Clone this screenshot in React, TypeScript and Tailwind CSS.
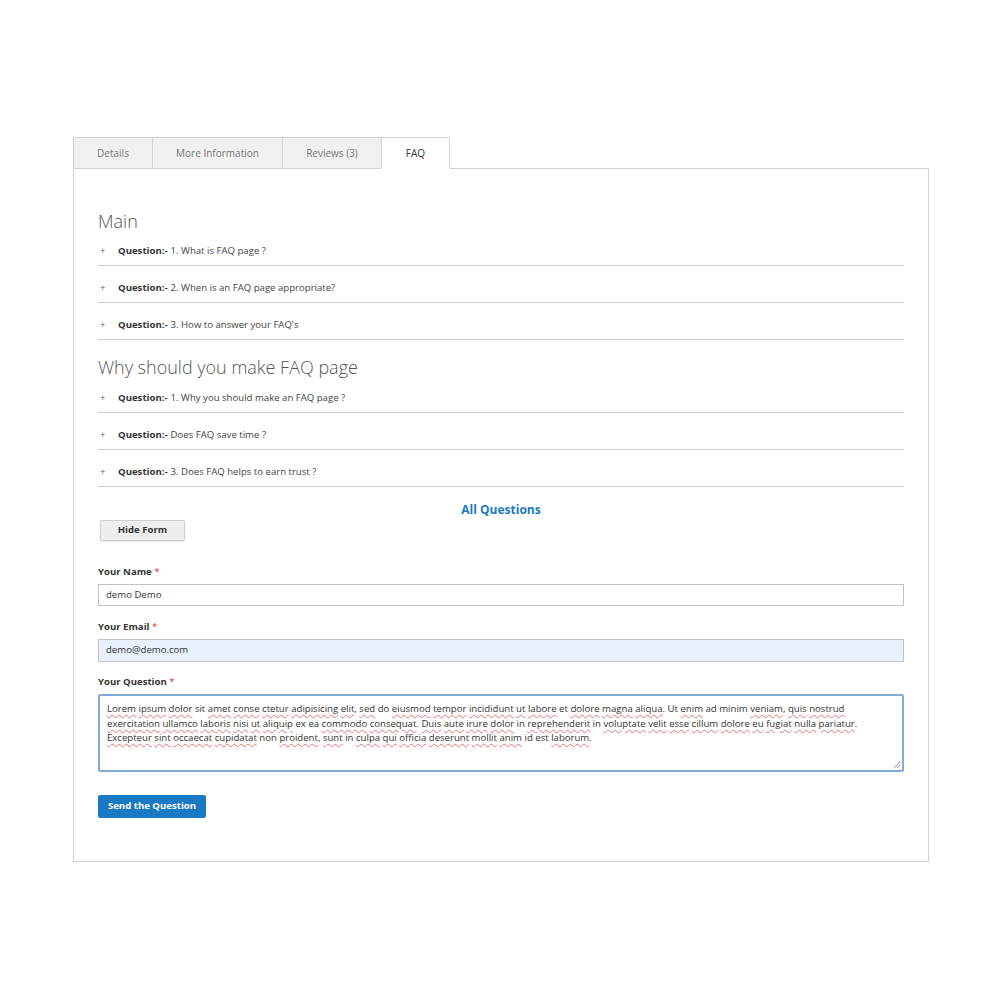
const tabs = ["Details", "More Information", "Reviews (3)", "FAQ"];

const groups = [
  {
    title: "Main",
    items: ["1. What is FAQ page ?", "2. When is an FAQ page appropriate?", "3. How to answer your FAQ's"],
  },
  {
    title: "Why should you make FAQ page",
    items: ["1. Why you should make an FAQ page ?", "Does FAQ save time ?", "3. Does FAQ helps to earn trust ?"],
  },
];

const lorem =
  "Lorem ipsum dolor sit amet conse ctetur adipisicing elit, sed do eiusmod tempor incididunt ut labore et dolore magna aliqua. Ut enim ad minim veniam, quis nostrud exercitation ullamco laboris nisi ut aliquip ex ea commodo consequat. Duis aute irure dolor in reprehenderit in voluptate velit esse cillum dolore eu fugiat nulla pariatur. Excepteur sint occaecat cupidatat non proident, sunt in culpa qui officia deserunt mollit anim id est laborum.";

const plain = ["sit", "do", "et", "Ut", "ad", "minim", "ex", "ea", "in", "non", "id", "est"];

function Label({ text }: { text: string }) {
  return (
    <div className="text-[9.6px] leading-[15px] font-bold text-[#333] mb-[5px]">
      {text} <span className="text-[#e02b27] font-normal">*</span>
    </div>
  );
}

export default function App() {
  return (
    <div className="w-[1000px] h-[1000px] bg-white pt-[137px] pl-[73px] font-['Open_Sans',sans-serif] text-[#333]">
      <div className="w-[856px]">
        <div className="flex h-[32px] relative z-10">
          {tabs.map((t, i) => {
            const active = i === 3;
            return (
              <div
                key={t}
                className={
                  active
                    ? "w-[69px] bg-white border border-[#d1d1d1] border-b-white flex items-center justify-center text-[10px] text-[#333] -ml-px"
                    : i === 0
                    ? "w-[80px] bg-[#f0f0f0] border border-[#d1d1d1] flex items-center justify-center text-[10px] text-[#777]"
                    : i === 1
                    ? "w-[130px] bg-[#f0f0f0] border border-[#d1d1d1] border-l-0 flex items-center justify-center text-[10px] text-[#777]"
                    : "w-[99px] bg-[#f0f0f0] border border-[#d1d1d1] border-l-0 flex items-center justify-center text-[10px] text-[#777]"
                }
              >
                {t}
              </div>
            );
          })}
        </div>
        <div className="border border-[#d1d1d1] -mt-px px-[24px] pt-[44px] pb-[43px]">
          {groups.map((g, gi) => (
            <div key={g.title}>
              <h2 className={gi === 0 ? "text-[18px] font-light text-[#555] leading-[16px]" : "text-[18px] font-light text-[#555] leading-[16px] mb-[1px]"}>
                {g.title}
              </h2>
              {g.items.map((q) => (
                <div key={q} className="flex items-center border-b border-[#ccc] h-[37px] pt-[8px] text-[9.6px] last:mb-[19px]">
                  <span className="w-[20px] text-[#666] pl-[2px]">+</span>
                  <span className="font-bold">Question:-</span>
                  <span className="ml-[3px] text-[#444]">{q}</span>
                </div>
              ))}
            </div>
          ))}
          <div className="-mt-[4px] text-center text-[12px] font-bold text-[#1979c3] leading-[16px]">All Questions</div>
          <button className="block mt-[2px] ml-[2px] w-[85px] h-[21px] bg-[#eee] border border-[#cdcdcd] rounded-[2px] text-[9.6px] font-bold text-[#333] shadow-[0_1px_1px_rgba(0,0,0,0.08)]">
            Hide Form
          </button>
          <div className="mt-[23px]">
            <Label text="Your Name" />
            <div className="h-[22px] border border-[#c2c2c2] px-[7px] flex items-center text-[9.6px]">demo Demo</div>
          </div>
          <div className="mt-[13px]">
            <Label text="Your Email" />
            <div className="h-[23px] border border-[#c2c2c2] bg-[#e8f0fe] px-[7px] flex items-center text-[9.6px]">demo@demo.com</div>
          </div>
          <div className="mt-[12px]">
            <Label text="Your Question" />
            <div className="relative h-[78px] border-2 border-[#84acd2] rounded-[2px] px-[7px] py-[6px] text-[9.6px] leading-[14.5px] text-[#333]">
              {lorem.split(" ").map((w, i) => {
                const bare = w.replace(/[.,]/g, "");
                const u = !plain.includes(bare);
                const tail = w.slice(bare.length);
                return (
                  <span key={i}>
                    {u ? (
                      <span className="underline decoration-wavy decoration-[#e57373] decoration-[0.5px] underline-offset-[2px]">{bare}</span>
                    ) : (
                      bare
                    )}
                    {tail}{" "}
                  </span>
                );
              })}
              <svg className="absolute right-[1px] bottom-[1px]" width="8" height="8" viewBox="0 0 8 8">
                <path d="M7 1L1 7M7 4L4 7" stroke="#999" strokeWidth="1" />
              </svg>
            </div>
          </div>
          <button className="block mt-[23px] h-[23px] w-[108px] bg-[#1979c3] border border-[#1979c3] rounded-[2px] text-white text-[9.6px] font-bold">
            Send the Question
          </button>
        </div>
      </div>
    </div>
  );
}
